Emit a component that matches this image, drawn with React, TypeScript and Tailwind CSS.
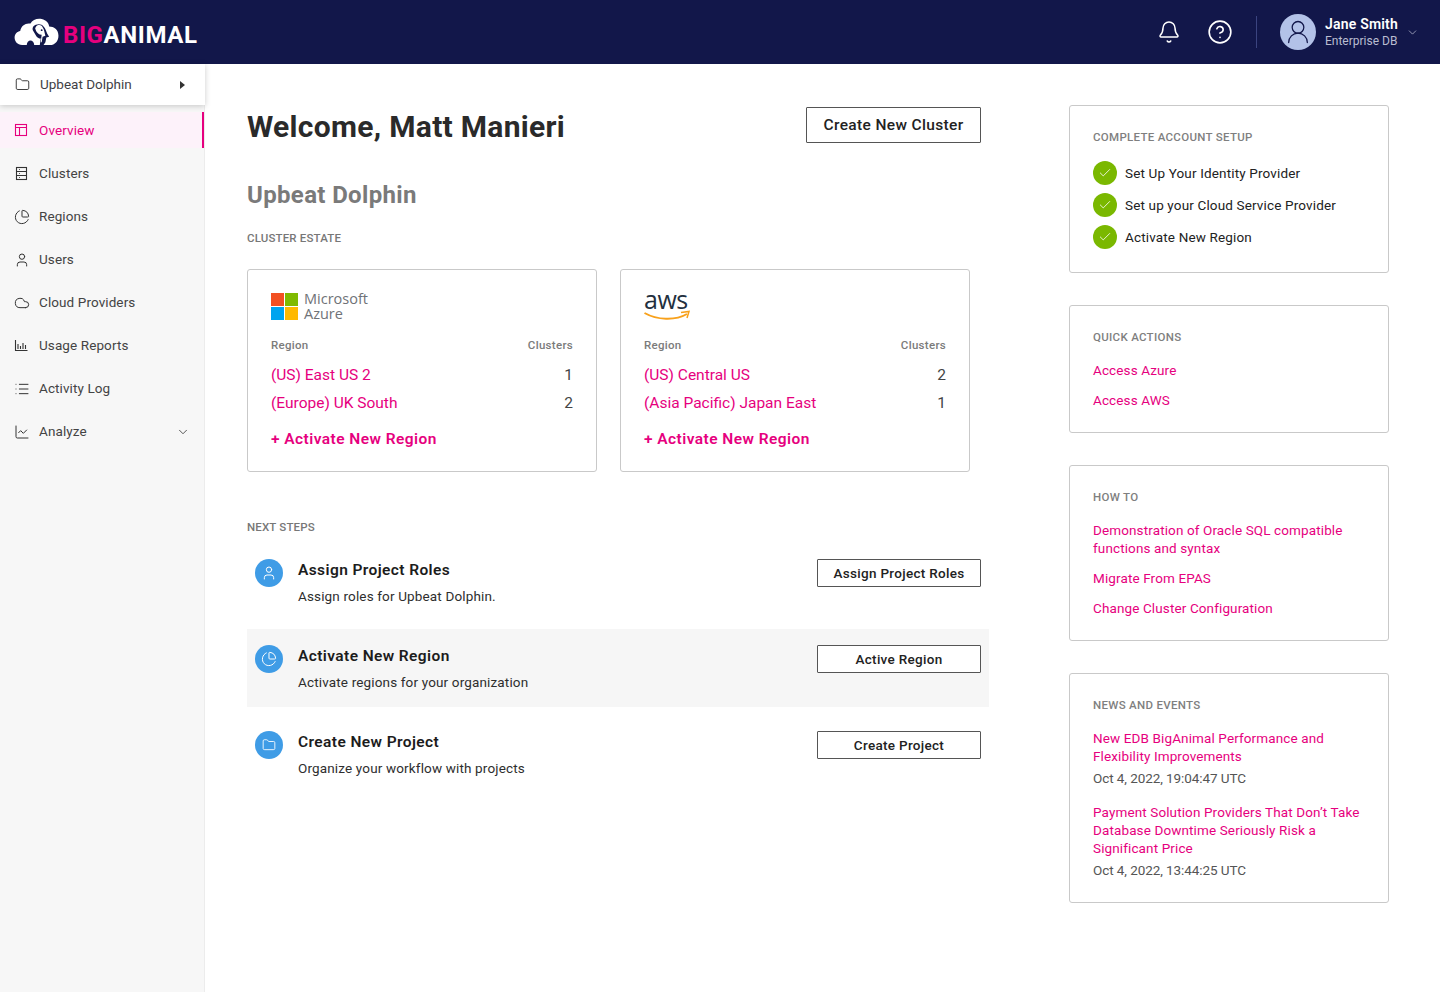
import React from "react";
import { Folder, PieChart, User, Cloud, List, LineChart, ChevronDown, Bell, CircleHelp, Check, UserRound } from "lucide-react";

const Logo = () => (
  <svg width="46" height="28" viewBox="0 0 48 30" className="shrink-0">
    <path fill="#fff" d="M8 29C3 29 0 25 0 21c0-4 3-6.500 6-7 1-6 6-9 11-8 2-4 7-6 12-5 5 1 8 5 8 8 5 0 10 3 10 10 0 6-4 10-9 10H8z" />
    <path fill="#12174a" d="M20 9c3-3 9-3 11 0 2 2 3 5 4 8l2 3-3 1-1 5-2 3h-4l1-7c-2 0-4-1-5-3l-3-5c-1-2-1-3 0-5z" />
    <path fill="#fff" d="M23 9c2-2 6-2 7 1 2 3 2 6 3 9l-3 1-1 6h-1l1-8c-3 0-5-2-6-4l-1-3z" />
    <circle cx="29" cy="13" r="1" fill="#12174a" />
    <path fill="#12174a" d="M13 29c0-3 2-5 4-5s4 2 4 5h-8z" />
  </svg>
);

type IconP = { size?: number; strokeWidth?: number; className?: string };

const ClusterIcon = ({ size = 15, className }: IconP) => (
  <svg width={size} height={size} viewBox="0 0 15 15" fill="none" stroke="currentColor" strokeWidth="1.1" className={className}>
    <rect x="2.500" y="1.500" width="10" height="12" />
    <path d="M2.500 5.500h10M2.500 9.500h10M5 3.500h0.800M5 7.500h0.800M5 11.500h0.800" />
  </svg>
);

const OverviewIcon = ({ size = 14, className }: IconP) => (
  <svg width={size} height={size} viewBox="0 0 14 14" fill="none" stroke="currentColor" strokeWidth="1.1" className={className}>
    <rect x="1.500" y="1.500" width="11" height="11" />
    <path d="M1.500 4.500h11M5.500 4.500v8" />
  </svg>
);

const UsageIcon = ({ size = 15, className }: IconP) => (
  <svg width={size} height={size} viewBox="0 0 15 15" fill="none" stroke="currentColor" strokeWidth="1.1" className={className}>
    <path d="M1.500 2v10.500h12M4 11V6M6.500 11V8M9 11V5M11.500 11V7" />
  </svg>
);

const nav = [
  { label: "Clusters", Icon: ClusterIcon, size: 15 },
  { label: "Regions", Icon: PieChart, size: 16 },
  { label: "Users", Icon: User, size: 16 },
  { label: "Cloud Providers", Icon: Cloud, size: 16 },
  { label: "Usage Reports", Icon: UsageIcon, size: 15 },
  { label: "Activity Log", Icon: List, size: 16 },
  { label: "Analyze", Icon: LineChart, size: 16 },
];

const PINK = "text-[#e6007e]";

function Sidebar() {
  return (
    <aside className="w-[205px] shrink-0 bg-[#f7f7f7] border-r border-[#ececec] min-h-[928px]">
      <div className="h-[41px] w-[205px] bg-white flex items-center pl-[15px] pr-[20px] shadow-[0_1px_6px_rgba(0,0,0,0.2)] text-[13.500px] text-[#3f3f46] relative">
        <Folder size={15} strokeWidth={1.5} className="text-[#333]" />
        <span className="ml-[10px] flex-1">Upbeat Dolphin</span>
        <span className="w-0 h-0 border-y-[4px] border-y-transparent border-l-[5px] border-l-[#333]" />
      </div>
      <div className="mt-[7px] h-[36px] w-[204px] bg-[#fdf2fa] border-r-2 border-[#e6007e] flex items-center pl-[14px] text-[13.500px] tracking-[0.1px] text-[#e6007e]">
        <OverviewIcon />
        <span className="ml-[11px]">Overview</span>
      </div>
      <nav className="mt-[4px]">
        {nav.map(({ label, Icon, size }) => (
          <div key={label} className="h-[43px] flex items-center pl-[13px] pr-[14px] text-[13.500px] text-[#444] tracking-[0.1px]">
            <span className="w-[17px] flex justify-center shrink-0">
              <Icon size={size} strokeWidth={1.5} className="text-[#333]" />
            </span>
            <span className="ml-[9px] flex-1">{label}</span>
            {label === "Analyze" && <ChevronDown size={14} strokeWidth={1.4} className="text-[#333]" />}
          </div>
        ))}
      </nav>
    </aside>
  );
}

function ProviderCard({ logo, rows }: { logo: React.ReactNode; rows: [string, number][] }) {
  return (
    <div className="w-[350px] h-[203px] border border-[#c9c9c9] rounded-[3px] px-[23px] pt-[19px]">
      <div className="h-[34px] flex items-center">{logo}</div>
      <div className="mt-[14px] flex justify-between text-[11.500px] font-medium text-[#7b7b7b] tracking-[0.3px] leading-[16px]">
        <span>Region</span>
        <span>Clusters</span>
      </div>
      <div className="mt-[9px]">
        {rows.map(([n, c]) => (
          <div key={n} className="h-[28px] flex items-center justify-between text-[15.500px]">
            <span className={PINK}>{n}</span>
            <span className="text-[#444]">{c}</span>
          </div>
        ))}
      </div>
      <div className={`mt-[11px] text-[15.500px] font-semibold tracking-[0.45px] leading-[20px] ${PINK}`}>+ Activate New Region</div>
    </div>
  );
}

function Step({ Icon, size, title, desc, btn, shaded }: { Icon: any; size: number; title: string; desc: string; btn: string; shaded?: boolean }) {
  return (
    <div className={`h-[78px] pl-[8px] pr-[8px] pt-[16px] flex items-start ${shaded ? "bg-[#f6f6f6]" : ""}`}>
      <div className="w-[28px] h-[28px] rounded-full bg-[#3f9ce6] flex items-center justify-center shrink-0">
        <Icon size={size} strokeWidth={1.5} className="text-white" />
      </div>
      <div className="ml-[15px] flex-1">
        <div className="text-[15.500px] font-semibold text-[#1c1c1c] leading-[20px] mt-[1px] tracking-[0.4px]">{title}</div>
        <div className="text-[13.500px] text-[#2e2e2e] mt-[6px] leading-[20px] tracking-[0.15px]">{desc}</div>
      </div>
      <button className="w-[164px] h-[28px] border border-[#555] rounded-[1px] text-[13.500px] font-medium text-[#222] tracking-[0.3px] bg-white">{btn}</button>
    </div>
  );
}

function Panel({ title, children, className }: { title: string; children: React.ReactNode; className?: string }) {
  return (
    <section className={`w-[320px] border border-[#c9c9c9] rounded-[3px] px-[23px] ${className ?? ""}`}>
      <h3 className="pt-[23px] text-[11.500px] leading-[16px] font-medium text-[#7f7f7f] tracking-[0.3px] uppercase">{title}</h3>
      {children}
    </section>
  );
}

const A = ({ children, cls }: { children: React.ReactNode; cls?: string }) => (
  <a className={`block text-[13.500px] leading-[18px] tracking-[0.12px] ${PINK} ${cls ?? ""}`}>{children}</a>
);

const Done = ({ children }: { children: React.ReactNode }) => (
  <div className="flex items-center h-[32px]">
    <span className="w-[24px] h-[24px] rounded-full bg-[#7ab800] flex items-center justify-center">
      <Check size={14} strokeWidth={1.4} className="text-white" />
    </span>
    <span className="ml-[8px] text-[13.500px] text-[#222] tracking-[0.15px]">{children}</span>
  </div>
);

export default function App() {
  return (
    <div className="min-h-[992px] bg-white font-['Roboto',sans-serif] overflow-hidden">
      <header className="h-[64px] bg-[#12174a] flex items-center pl-[14px] pr-[21px]">
        <Logo />
        <span className="ml-[3px] mt-[6px] text-[24px] font-bold tracking-[0.6px] text-[#e6007e]">BIG</span>
        <span className="mt-[6px] text-[24px] font-bold tracking-[0.6px] text-white">ANIMAL</span>
        <div className="ml-auto flex items-center">
          <Bell size={24} strokeWidth={1.5} className="text-white" />
          <CircleHelp size={26} strokeWidth={1.5} className="text-white ml-[26px]" />
          <div className="w-px h-[32px] bg-[#3b4480] ml-[23px]" />
          <div className="ml-[23px] w-[36px] h-[36px] rounded-full bg-[#b3c2e8] flex items-center justify-center">
            <UserRound size={28} strokeWidth={1.1} className="text-[#12174a]" />
          </div>
          <div className="ml-[9px] leading-none">
            <div className="text-[14px] font-semibold text-white tracking-[0.2px] leading-[17px]">Jane Smith</div>
            <div className="text-[12px] text-[#b9bdd0] leading-[16px]">Enterprise DB</div>
          </div>
          <ChevronDown size={13} strokeWidth={1.3} className="text-[#c5c8da] ml-[8px]" />
        </div>
      </header>
      <div className="flex">
        <Sidebar />
        <main className="w-[784px] shrink-0 pl-[42px] pr-0">
          <div className="w-[734px] flex items-start justify-between pt-[43px]">
            <h1 className="text-[30px] font-bold text-[#2a2a2a] leading-[40px] tracking-[0.3px]">Welcome, Matt Manieri</h1>
            <button className="w-[175px] h-[36px] border border-[#555] rounded-[1px] text-[15.500px] font-medium text-[#222] tracking-[0.35px] pt-[1px]">Create New Cluster</button>
          </div>
          <h2 className="mt-[32px] text-[24px] font-bold text-[#7a7a7a] leading-[32px] tracking-[0.35px]">Upbeat Dolphin</h2>
          <div className="mt-[19px] text-[11.500px] text-[#777] font-medium tracking-[0.15px] leading-[16px]">CLUSTER ESTATE</div>
          <div className="mt-[23px] flex gap-[23px]">
            <ProviderCard
              logo={
                <div className="flex items-center">
                  <div className="grid grid-cols-2 gap-[1px] w-[27px]">
                    <span className="h-[13px] bg-[#f25022]" />
                    <span className="h-[13px] bg-[#7fba00]" />
                    <span className="h-[13px] bg-[#00a4ef]" />
                    <span className="h-[13px] bg-[#ffb900]" />
                  </div>
                  <div className="ml-[6px] text-[14.500px] leading-[15px] text-[#6f7277] font-['Open_Sans',sans-serif]">Microsoft<br />Azure</div>
                </div>
              }
              rows={[["(US) East US 2", 1], ["(Europe) UK South", 2]]}
            />
            <ProviderCard
              logo={
                <div className="relative w-[46px] h-[34px]">
                  <div className="text-[25px] leading-[20px] text-[#232f3e] font-['Open_Sans',sans-serif] font-medium -tracking-[0.5px]">aws</div>
                  <svg width="46" height="12" viewBox="0 0 46 12" className="absolute left-0 top-[21px]">
                    <path d="M0.500 3C13 10 31 11 43 4" fill="none" stroke="#f8a11b" strokeWidth="2" />
                    <path d="M37 2.500L45 1.500 43 8" fill="none" stroke="#f8a11b" strokeWidth="1.500" />
                  </svg>
                </div>
              }
              rows={[["(US) Central US", 2], ["(Asia Pacific) Japan East", 1]]}
            />
          </div>
          <div className="mt-[47px] text-[11.500px] text-[#777] font-medium tracking-[0.15px] leading-[16px]">NEXT STEPS</div>
          <div className="mt-[8px] w-[742px]">
            <Step Icon={User} size={16} title="Assign Project Roles" desc="Assign roles for Upbeat Dolphin." btn="Assign Project Roles" />
            <div className="h-[8px]" />
            <Step Icon={PieChart} size={16} title="Activate New Region" desc="Activate regions for your organization" btn="Active Region" shaded />
            <div className="h-[8px]" />
            <Step Icon={Folder} size={14} title="Create New Project" desc="Organize your workflow with projects" btn="Create Project" />
          </div>
        </main>
        <aside className="ml-[80px] pt-[41px] pb-[32px] w-[320px] flex flex-col gap-[32px]">
          <Panel title="Complete Account Setup" className="h-[168px]">
            <div className="mt-[12px]">
              <Done>Set Up Your Identity Provider</Done>
              <Done>Set up your Cloud Service Provider</Done>
              <Done>Activate New Region</Done>
            </div>
          </Panel>
          <Panel title="Quick Actions" className="h-[128px]">
            <A cls="mt-[16px]">Access Azure</A>
            <A cls="mt-[12px]">Access AWS</A>
          </Panel>
          <Panel title="How To" className="h-[176px]">
            <A cls="mt-[16px]">Demonstration of Oracle SQL compatible functions and syntax</A>
            <A cls="mt-[12px]">Migrate From EPAS</A>
            <A cls="mt-[12px]">Change Cluster Configuration</A>
          </Panel>
          <Panel title="News and Events" className="h-[230px]">
            <A cls="mt-[16px]">New EDB BigAnimal Performance and Flexibility Improvements</A>
            <div className="mt-[4px] text-[13.500px] leading-[18px] text-[#555] -tracking-[0.08px]">Oct 4, 2022, 19:04:47 UTC</div>
            <A cls="mt-[16px]">Payment Solution Providers That Don’t Take Database Downtime Seriously Risk a Significant Price</A>
            <div className="mt-[4px] text-[13.500px] leading-[18px] text-[#555] -tracking-[0.08px]">Oct 4, 2022, 13:44:25 UTC</div>
          </Panel>
        </aside>
      </div>
    </div>
  );
}
